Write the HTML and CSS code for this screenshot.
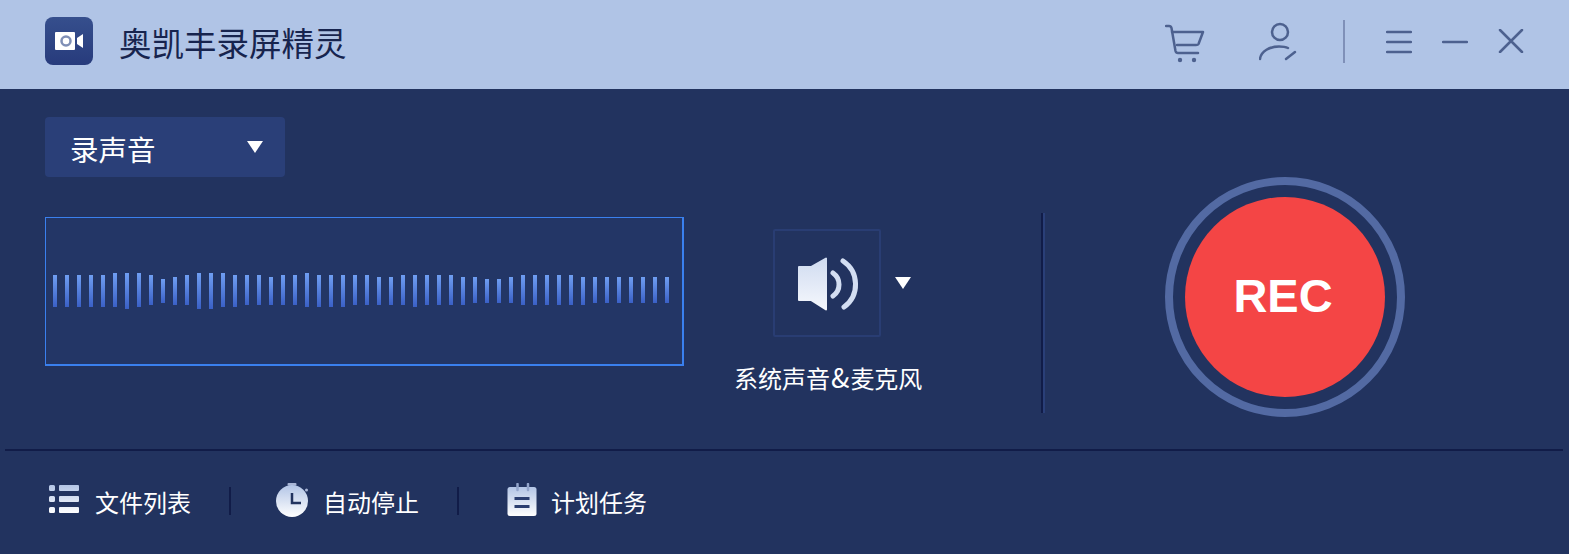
FILE: index.html
```html
<!DOCTYPE html>
<html lang="zh-CN">
<head>
    <meta charset="UTF-8">
    <meta name="viewport" content="width=device-width, initial-scale=1.0">
    <title>奥凯丰录屏精灵</title>
    <link rel="stylesheet" href="styles.css">
</head>
<body>
    <svg class="defs" width="0" height="0" aria-hidden="true">
        <defs>
            <linearGradient id="iconFill" x1="0" y1="0" x2="0" y2="1">
                <stop offset="0" stop-color="#b3c5e6"/>
                <stop offset="1" stop-color="#ffffff"/>
            </linearGradient>
            <linearGradient id="speakerFill" gradientUnits="userSpaceOnUse" x1="0" y1="0" x2="0" y2="54">
                <stop offset="0" stop-color="#cfdbf0"/>
                <stop offset="1" stop-color="#f6f8fd"/>
            </linearGradient>
            <linearGradient id="logoFill" x1="0" y1="0" x2="0" y2="1">
                <stop offset="0" stop-color="#364f8d"/>
                <stop offset="1" stop-color="#273b7c"/>
            </linearGradient>
        </defs>
    </svg>

    <header class="titlebar">
        <svg class="logo" width="48" height="48" viewBox="0 0 48 48">
            <rect width="48" height="48" rx="8" fill="url(#logoFill)"/>
            <rect x="10" y="15" width="20" height="18" rx="1" fill="#fff"/>
            <circle cx="21" cy="24" r="4.500" fill="none" stroke="#7f8fb6" stroke-width="2.500"/>
            <path d="M32 21 L38 17 V31 L32 27 Z" fill="#fff"/>
        </svg>
        <h1 class="app-name">奥凯丰录屏精灵</h1>
        <div class="window-tools">
            <svg class="tool tool-cart" width="40" height="42" viewBox="0 0 40 42">
                <path d="M1 2 H4 Q6 2 6.500 4 L10.500 27 Q11 29 13 29 H33"/>
                <path d="M7 8 H38 L33.500 20 Q33 21 31 21 H12"/>
                <circle class="dot" cx="15" cy="36" r="2.200"/>
                <circle class="dot" cx="29" cy="36" r="2.200"/>
            </svg>
            <svg class="tool tool-user" width="40" height="42" viewBox="0 0 40 42">
                <circle cx="21" cy="11" r="8"/>
                <path d="M1 38 C2 30 11 25.500 20 25.500 C24 25.500 27 26 29 27"/>
                <path d="M27 38 L36 31"/>
            </svg>
            <span class="tool-divider"></span>
            <svg class="tool tool-menu" width="26" height="24" viewBox="0 0 26 24">
                <path d="M1 2 H25 M1 12 H25 M1 22 H25"/>
            </svg>
            <svg class="tool tool-min" width="26" height="24" viewBox="0 0 26 24">
                <path d="M1 12 H25"/>
            </svg>
            <svg class="tool tool-close" width="26" height="24" viewBox="0 0 26 24">
                <path d="M2 1 L24 23 M24 1 L2 23"/>
            </svg>
        </div>
    </header>

    <main class="panel">
        <div class="left-col">
            <div class="mode-select">
                <span class="mode-text">录声音</span>
                <i class="arrow"></i>
            </div>
            <div class="wave">
                <i class="bar" style="height:32px;margin-top:57px"></i>
                <i class="bar" style="height:32px;margin-top:57px"></i>
                <i class="bar" style="height:32px;margin-top:57px"></i>
                <i class="bar" style="height:32px;margin-top:57px"></i>
                <i class="bar" style="height:32px;margin-top:57px"></i>
                <i class="bar" style="height:34px;margin-top:55px"></i>
                <i class="bar" style="height:36px;margin-top:55px"></i>
                <i class="bar" style="height:34px;margin-top:55px"></i>
                <i class="bar" style="height:30px;margin-top:57px"></i>
                <i class="bar" style="height:24px;margin-top:61px"></i>
                <i class="bar" style="height:28px;margin-top:59px"></i>
                <i class="bar" style="height:30px;margin-top:57px"></i>
                <i class="bar" style="height:36px;margin-top:55px"></i>
                <i class="bar" style="height:36px;margin-top:55px"></i>
                <i class="bar" style="height:34px;margin-top:55px"></i>
                <i class="bar" style="height:32px;margin-top:57px"></i>
                <i class="bar" style="height:30px;margin-top:57px"></i>
                <i class="bar" style="height:30px;margin-top:57px"></i>
                <i class="bar" style="height:28px;margin-top:59px"></i>
                <i class="bar" style="height:30px;margin-top:57px"></i>
                <i class="bar" style="height:30px;margin-top:57px"></i>
                <i class="bar" style="height:34px;margin-top:55px"></i>
                <i class="bar" style="height:32px;margin-top:57px"></i>
                <i class="bar" style="height:32px;margin-top:57px"></i>
                <i class="bar" style="height:32px;margin-top:57px"></i>
                <i class="bar" style="height:30px;margin-top:57px"></i>
                <i class="bar" style="height:30px;margin-top:57px"></i>
                <i class="bar" style="height:28px;margin-top:59px"></i>
                <i class="bar" style="height:28px;margin-top:59px"></i>
                <i class="bar" style="height:30px;margin-top:57px"></i>
                <i class="bar" style="height:32px;margin-top:57px"></i>
                <i class="bar" style="height:30px;margin-top:57px"></i>
                <i class="bar" style="height:30px;margin-top:57px"></i>
                <i class="bar" style="height:30px;margin-top:57px"></i>
                <i class="bar" style="height:28px;margin-top:59px"></i>
                <i class="bar" style="height:26px;margin-top:59px"></i>
                <i class="bar" style="height:24px;margin-top:61px"></i>
                <i class="bar" style="height:24px;margin-top:61px"></i>
                <i class="bar" style="height:26px;margin-top:59px"></i>
                <i class="bar" style="height:30px;margin-top:57px"></i>
                <i class="bar" style="height:30px;margin-top:57px"></i>
                <i class="bar" style="height:30px;margin-top:57px"></i>
                <i class="bar" style="height:30px;margin-top:57px"></i>
                <i class="bar" style="height:30px;margin-top:57px"></i>
                <i class="bar" style="height:28px;margin-top:59px"></i>
                <i class="bar" style="height:26px;margin-top:59px"></i>
                <i class="bar" style="height:26px;margin-top:59px"></i>
                <i class="bar" style="height:26px;margin-top:59px"></i>
                <i class="bar" style="height:26px;margin-top:59px"></i>
                <i class="bar" style="height:26px;margin-top:59px"></i>
                <i class="bar" style="height:26px;margin-top:59px"></i>
                <i class="bar" style="height:26px;margin-top:59px"></i>
            </div>
        </div>

        <div class="source">
            <div class="source-row">
                <div class="speaker-box">
                    <svg width="64" height="54" viewBox="0 0 64 54">
                        <path class="cone" d="M2 10 H14 L29 1.500 V52.500 L14 43 H2 Z"/>
                        <path class="wave-arc" d="M36 16 A14 14 0 0 1 36 39"/>
                        <path class="wave-arc" d="M46 4 A28 28 0 0 1 47 50"/>
                    </svg>
                </div>
                <i class="arrow"></i>
            </div>
            <div class="source-label">系统声音<span class="amp">&amp;</span>麦克风</div>
        </div>

        <span class="panel-divider"></span>

        <div class="rec-ring">
            <button class="rec-btn" type="button">REC</button>
        </div>
    </main>

    <footer class="footer">
        <a class="foot-item">
            <svg class="foot-list" width="30" height="30" viewBox="0 0 30 30">
                <path fill="url(#iconFill)" d="M1.500 0 H4.500 Q6 0 6 1.500 V4.500 Q6 6 4.500 6 H1.500 Q0 6 0 4.500 V1.500 Q0 0 1.500 0 Z M1.500 11 H4.500 Q6 11 6 12.500 V15.500 Q6 17 4.500 17 H1.500 Q0 17 0 15.500 V12.500 Q0 11 1.500 11 Z M1.500 22 H4.500 Q6 22 6 23.500 V26.500 Q6 28 4.500 28 H1.500 Q0 28 0 26.500 V23.500 Q0 22 1.500 22 Z M11 0 H29 Q30 0 30 1 V5 Q30 6 29 6 H11 Q10 6 10 5 V1 Q10 0 11 0 Z M11 11 H29 Q30 11 30 12 V16 Q30 17 29 17 H11 Q10 17 10 16 V12 Q10 11 11 11 Z M11 22 H29 Q30 22 30 23 V27 Q30 28 29 28 H11 Q10 28 10 27 V23 Q10 22 11 22 Z"/>
            </svg>
            <span>文件列表</span>
        </a>
        <span class="foot-divider"></span>
        <a class="foot-item">
            <svg class="foot-timer" width="32" height="34" viewBox="0 0 32 34">
                <rect x="11.500" y="0" width="9" height="2.500" rx="1" fill="#a9b6d6"/>
                <circle cx="16" cy="18" r="16" fill="url(#iconFill)"/>
                <circle cx="30.500" cy="7" r="1.500" fill="#a9b6d6"/>
                <path d="M16 10 V20 H25" fill="none" stroke="#22335f" stroke-width="2.500"/>
            </svg>
            <span>自动停止</span>
        </a>
        <span class="foot-divider"></span>
        <a class="foot-item">
            <svg class="foot-plan" width="30" height="34" viewBox="0 0 30 34">
                <rect x="0.500" y="4" width="29" height="29" rx="2.500" fill="url(#iconFill)"/>
                <path d="M10.500 1 V7 M21 1 V7" fill="none" stroke="#93a5cb" stroke-width="2.500" stroke-linecap="round"/>
                <rect x="7.500" y="14" width="15" height="3" fill="#2b3e70"/>
                <rect x="7.500" y="22" width="15" height="3" fill="#2b3e70"/>
            </svg>
            <span>计划任务</span>
        </a>
    </footer>
</body>
</html>
```

FILE: styles.css
```css
/* CSS styles */
body {
    margin: 0;
    padding: 0;
    width: 1569px;
    height: 554px;
    overflow: hidden;
    background-color: #22335f;
    color: #fff;
    font-family: "Noto Sans CJK SC", "Liberation Sans", sans-serif;
}

.defs {
    position: absolute;
}

/* title bar */
.titlebar {
    display: flex;
    align-items: center;
    height: 89px;
    padding-left: 45px;
    background-color: #b0c4e6;
}

.logo {
    display: block;
    margin-top: -7px;
}

.app-name {
    margin: -6px 0 0 26px;
    font-size: 32.500px;
    font-weight: 400;
    line-height: 40px;
    color: #17244e;
}

.window-tools {
    display: flex;
    align-items: center;
    margin-left: auto;
    height: 89px;
}

.tool {
    display: block;
    fill: none;
    stroke: #4d618f;
    stroke-width: 2.5;
    stroke-linecap: round;
    stroke-linejoin: round;
}

.tool .dot {
    fill: #4d618f;
    stroke: none;
}

.tool-cart {
    margin-top: 1px;
}

.tool-user {
    margin-left: 54px;
    margin-top: -6px;
}

.tool-divider {
    width: 2px;
    height: 43px;
    margin: 0 0 6px 44px;
    background-color: #7f90b8;
}

.tool-menu {
    margin: 0 0 6px 41px;
}

.tool-min {
    margin: 0 0 6px 30px;
}

.tool-close {
    margin: 0 45px 8px 30px;
}

/* middle panel */
.panel {
    display: flex;
    align-items: flex-start;
    height: 332px;
    padding: 28px 0 0 45px;
}

.left-col {
    width: 639px;
}

.mode-select {
    display: flex;
    align-items: center;
    justify-content: space-between;
    box-sizing: border-box;
    width: 240px;
    height: 60px;
    padding: 0 22px 0 26px;
    background-color: #2a3f78;
    border-radius: 4px;
    font-size: 28.500px;
}

.mode-text {
    margin-top: 3px;
    margin-left: -1px;
}

.arrow {
    display: block;
    width: 0;
    height: 0;
    border-left: 8.500px solid transparent;
    border-right: 8.500px solid transparent;
    border-top: 12px solid #fff;
}

.wave {
    display: flex;
    align-items: flex-start;
    gap: 8px;
    box-sizing: border-box;
    height: 149px;
    margin-top: 40px;
    padding-left: 7px;
    background-color: #233666;
    border: solid #3a80ee;
    border-width: 1px 2px 2px 1px;
}

.bar {
    display: block;
    flex: none;
    width: 4px;
    background: linear-gradient(#6f9ef2, #3a60c6);
}

.source {
    box-sizing: border-box;
    width: 190px;
    margin: 112px 0 0 50px;
}

.source-row {
    display: flex;
    align-items: center;
    margin-left: 39px;
}

.speaker-box {
    display: flex;
    align-items: center;
    box-sizing: border-box;
    width: 108px;
    height: 108px;
    padding-left: 22px;
    border: 2px solid #293d73;
    border-radius: 2px;
}

.speaker-box svg {
    display: block;
    flex: none;
    margin-top: 1px;
}

.speaker-box .cone {
    fill: url(#speakerFill);
    stroke: url(#speakerFill);
    stroke-width: 2;
    stroke-linejoin: round;
}

.speaker-box .wave-arc {
    fill: none;
    stroke: #d3def2;
    stroke-width: 5;
    stroke-linecap: round;
}

.source-row .arrow {
    margin: 0 0 0 14px;
}

.source-label {
    margin-top: 23px;
    font-size: 24px;
    line-height: 36px;
    white-space: nowrap;
}

.amp {
    margin: 0 1px;
    font-size: 27px;
    line-height: 24px;
}

.panel-divider {
    flex: none;
    width: 2px;
    height: 200px;
    margin: 96px 0 0 117px;
    background-color: #111c48;
    border-right: 2px solid #2a3f78;
}

.rec-ring {
    flex: none;
    box-sizing: border-box;
    width: 240px;
    height: 240px;
    margin: 60px 0 0 120px;
    padding: 12px;
    border: 8px solid #536aa3;
    border-radius: 50%;
}

.rec-btn {
    display: block;
    width: 200px;
    height: 200px;
    padding: 0 4px 3px 0;
    background-color: #f44545;
    border: none;
    border-radius: 50%;
    color: #fff;
    font-family: "Liberation Sans", Arial, sans-serif;
    font-size: 47px;
    font-weight: 700;
    cursor: pointer;
}

/* bottom bar */
.footer {
    display: flex;
    align-items: center;
    box-sizing: border-box;
    height: 105px;
    margin: 0 6px 0 5px;
    padding: 0 0 2px 44px;
    border-top: 2px solid #111c48;
    font-size: 24px;
}

.foot-item {
    display: flex;
    align-items: center;
}

.foot-item svg {
    display: block;
    margin-bottom: 4px;
}

.foot-list {
    margin-right: 16px;
}

.foot-timer {
    margin-right: 15px;
}

.foot-plan {
    margin-left: 3px;
    margin-right: 14px;
}

.foot-divider {
    width: 2px;
    height: 28px;
    margin: -2px 45px 0 38px;
    background-color: #111c48;
}
```
